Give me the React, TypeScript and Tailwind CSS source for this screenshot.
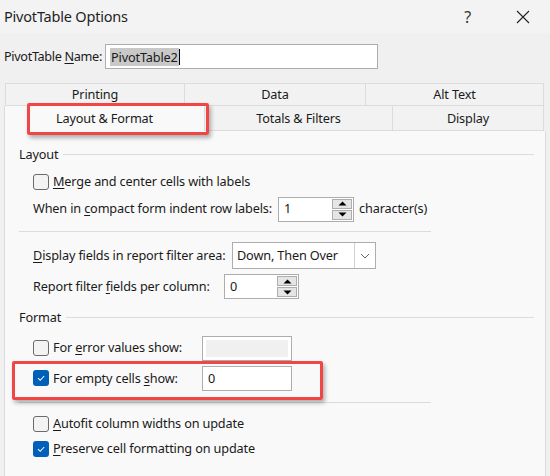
import React from "react";

const U = ({ children }: { children: React.ReactNode }) => (
  <span className="underline underline-offset-[2px] decoration-[1px]">{children}</span>
);

const Check = ({ checked }: { checked?: boolean }) =>
  checked ? (
    <div className="w-[16px] h-[16px] rounded-[3px] bg-[#005fb8] flex items-center justify-center shrink-0">
      <svg width="10" height="10" viewBox="0 0 10 10">
        <path d="M2 5.2 L4.2 7.3 L8.2 3" stroke="white" strokeWidth="1.1" fill="none" />
      </svg>
    </div>
  ) : (
    <div className="w-[16px] h-[16px] rounded-[3px] border border-[#6b6b6b] bg-[#f3f3f3] shrink-0" />
  );

const Spin = () => (
  <div className="flex flex-col w-[21px] h-full py-[1px] pr-[1px] gap-[1px]">
    {[0, 1].map((i) => (
      <div key={i} className="flex-1 border border-[#adadad] bg-[#e5e5e5] flex items-center justify-center">
        <svg width="9" height="5" viewBox="0 0 9 5">
          {i === 0 ? <path d="M0.5 4.5 L4.5 0.5 L8.5 4.5 Z" fill="#000" /> : <path d="M0.5 0.5 L4.5 4.5 L8.5 0.5 Z" fill="#000" />}
        </svg>
      </div>
    ))}
  </div>
);

export default function App() {
  const font = { fontFamily: '"Noto Sans", "Open Sans", sans-serif' };
  return (
    <div className="w-[550px] h-[476px] bg-[#f0f0f0] overflow-hidden relative text-[#1a1a1a] text-[12.7px] tracking-[-0.15px]" style={font}>
      {/* title bar */}
      <div className="h-[33px] bg-[#f3f3f3] flex items-center pl-[4px] relative">
        <span className="text-[14.5px] tracking-[-0.2px] text-[#1f1f1f]">PivotTable Options</span>
        <span className="ml-auto mr-[45px] text-[16px] text-[#333]">?</span>
        <svg width="14" height="14" viewBox="0 0 14 14" className="mr-[20px]">
          <path d="M1 1 L13 13 M13 1 L1 13" stroke="#222" strokeWidth="1.1" />
        </svg>
      </div>

      {/* name row */}
      <div className="flex items-center h-[25px] mt-[11px] pl-[4px]">
        <span className="w-[101px] whitespace-nowrap tracking-[-0.35px]">
          PivotTable <U>N</U>ame:
        </span>
        <div className="w-[273px] h-[25px] border border-[#adadad] bg-white flex items-center pl-[4px]">
          <span className="bg-[#c8c8c8] px-[1px] leading-[18px]">PivotTable2</span>
          <span className="w-[1px] h-[16px] bg-black" />
        </div>
      </div>

      {/* tabs */}
      <div className="mt-[13px] ml-[5px] w-[539px] flex h-[24px] pt-[1px]">
        <div className="w-[180px] border border-[#dcdcdc] bg-[#f2f2f2] flex items-center justify-center">Printing</div>
        <div className="w-[181px] border-y border-r border-[#dcdcdc] bg-[#f2f2f2] flex items-center justify-center">Data</div>
        <div className="flex-1 border-y border-r border-[#dcdcdc] bg-[#f2f2f2] flex items-center justify-center">Alt Text</div>
      </div>
      <div className="ml-[4px] w-[540px] flex h-[25px]">
        <div className="w-[200px] border-l border-[#dcdcdc] bg-[#f9f9f9] flex items-center justify-center pt-[1px]">Layout &amp; Format</div>
        <div className="w-[188px] border-l border-b border-[#dcdcdc] bg-[#f2f2f2] flex items-center justify-center pt-[1px]">Totals &amp; Filters</div>
        <div className="flex-1 border-x border-b border-[#dcdcdc] bg-[#f2f2f2] flex items-center justify-center pt-[1px]">Display</div>
      </div>

      {/* panel */}
      <div className="ml-[4px] w-[542px] h-[400px] bg-[#f9f9f9] border-x border-[#dcdcdc] flex flex-col">
        {/* Layout header */}
        <div className="mt-[14px] h-[20px] flex items-center pl-[14px] pr-[11px]">
          <span>Layout</span>
          <div className="flex-1 h-[1px] bg-[#dcdcdc] ml-[5px] -mt-[1px]" />
        </div>
        <div className="mt-[5px] h-[24px] flex items-center pl-[28px] gap-[4px]">
          <Check />
          <span>
            <U>M</U>erge and center cells with labels
          </span>
        </div>
        <div className="mt-[2px] h-[26px] flex items-center pl-[28px]">
          <span>
            When in <U>c</U>ompact form indent row labels:
          </span>
          <div className="ml-[6px] w-[76px] h-[25px] border border-[#adadad] bg-white flex">
            <span className="flex-1 pl-[5px] flex items-center">1</span>
            <Spin />
          </div>
          <span className="ml-[5px]">character(s)</span>
        </div>
        <div className="mt-[9px] h-[1px] w-[412px] ml-[14px] bg-[#dcdcdc]" />
        <div className="mt-[10px] h-[27px] flex items-center pl-[28px]">
          <span className="w-[199px] whitespace-nowrap">
            <U>D</U>isplay fields in report filter area:
          </span>
          <div className="w-[144px] h-[27px] border border-[#adadad] bg-white flex">
            <span className="flex-1 pl-[4px] flex items-center">Down, Then Over</span>
            <div className="w-[21px] border-l border-[#d0d0d0] flex items-center justify-center">
              <svg width="10" height="6" viewBox="0 0 10 6">
                <path d="M1 1 L5 5 L9 1" stroke="#666" strokeWidth="1" fill="none" />
              </svg>
            </div>
          </div>
        </div>
        <div className="mt-[5px] h-[25px] flex items-center pl-[28px]">
          <span className="w-[191px]">
            Report filter <U>f</U>ields per column:
          </span>
          <div className="w-[75px] h-[25px] border border-[#adadad] bg-white flex">
            <span className="flex-1 pl-[5px] flex items-center">0</span>
            <Spin />
          </div>
        </div>

        {/* Format header */}
        <div className="mt-[9px] h-[20px] flex items-center pl-[14px] pr-[11px]">
          <span>Format</span>
          <div className="flex-1 h-[1px] bg-[#dcdcdc] ml-[5px] -mt-[1px]" />
        </div>
        <div className="mt-[8px] h-[24px] flex items-center pl-[28px]">
          <div className="w-[169px] flex items-center gap-[4px]">
            <Check />
            <span>
              For <U>e</U>rror values show:
            </span>
          </div>
          <div className="w-[90px] h-[25px] border border-[#adadad] bg-white p-[3px]">
            <div className="w-full h-full bg-[#f0f0f0]" />
          </div>
        </div>
        <div className="mt-[6px] h-[25px] flex items-center pl-[28px]">
          <div className="w-[169px] flex items-center gap-[4px]">
            <Check checked />
            <span>
              For empty cells <U>s</U>how:
            </span>
          </div>
          <div className="w-[90px] h-[25px] border border-[#adadad] bg-white pl-[5px] flex items-center">0</div>
        </div>
        <div className="mt-[11px] h-[1px] w-[412px] ml-[14px] bg-[#dcdcdc]" />
        <div className="mt-[9px] h-[24px] flex items-center pl-[28px] gap-[4px]">
          <Check />
          <span>
            <U>A</U>utofit column widths on update
          </span>
        </div>
        <div className="mt-[1px] h-[24px] flex items-center pl-[28px] gap-[4px]">
          <Check checked />
          <span>
            <U>P</U>reserve cell formatting on update
          </span>
        </div>
      </div>

      {/* annotation boxes */}
      <div className="absolute left-[27px] top-[103px] w-[182px] h-[32px] border-[3px] border-[#f24646] rounded-[2px] shadow-[2px_3px_4px_rgba(0,0,0,0.3)]" />
      <div className="absolute left-[12px] top-[361px] w-[311px] h-[39px] border-[3px] border-[#f24646] rounded-[2px] shadow-[2px_3px_4px_rgba(0,0,0,0.3)]" />
    </div>
  );
}
